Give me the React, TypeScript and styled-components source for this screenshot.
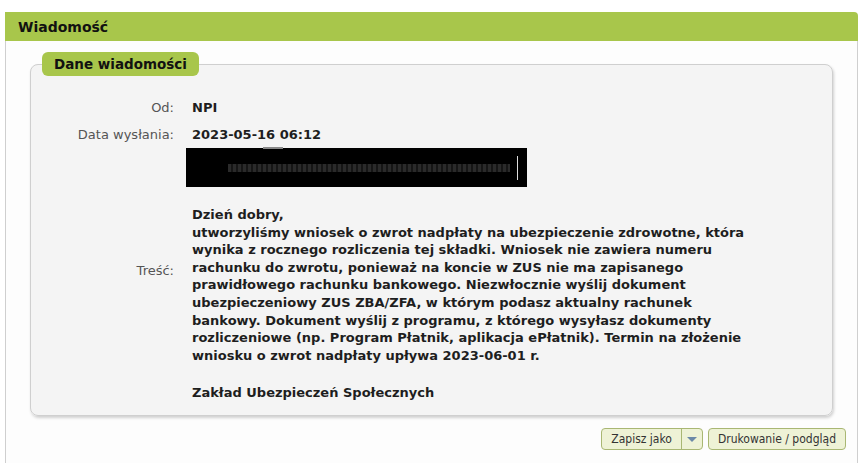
import React from "react";
import styled, { createGlobalStyle } from "styled-components";

const Global = createGlobalStyle`
  html, body { margin: 0; padding: 0; background: #ffffff; }
  body { font-family: "DejaVu Sans", Tahoma, Verdana, sans-serif; color: #1e1e1e; }
`;

const Page = styled.div`
  padding: 12px 7px 0 5px;
`;

const Window = styled.section`
  display: flex;
  flex-direction: column;
  height: 451px;
`;

const Header = styled.header`
  height: 29px;
  background: #a8c64b;
  border-top-right-radius: 4px;
  display: flex;
  align-items: center;
  padding-left: 13px;
  font-weight: bold;
  font-size: 14px;
  color: #111;
`;

const Body = styled.div`
  flex: 1;
  background: #fdfdfd;
  border-left: 1px solid #cfcfcf;
  border-right: 1px solid #cfcfcf;
  padding: 11px 24px 0 24px;
  display: flex;
  flex-direction: column;
`;

const Fieldset = styled.fieldset`
  margin: 0;
  padding: 0 0 14px 0;
  border: 1px solid #cfcfcf;
  border-radius: 8px;
  background: #f4f4f4;
  box-shadow: 1px 2px 3px rgba(0, 0, 0, 0.18);
`;

const Legend = styled.legend`
  margin-left: 11px;
  padding: 0 12px;
  height: 24px;
  line-height: 24px;
  background: #a8c64b;
  border-radius: 6px;
  font-weight: bold;
  font-size: 13.5px;
  color: #111;
`;

const Grid = styled.div`
  display: grid;
  grid-template-columns: 143px 1fr;
  column-gap: 18px;
  padding-top: 23px;
`;

const Label = styled.div<{ $top?: number; $mt?: number }>`
  text-align: right;
  font-size: 13px;
  line-height: 18px;
  color: #555;
  margin-top: ${(p) => p.$mt ?? 0}px;
  padding-top: ${(p) => p.$top ?? 0}px;
`;

const Value = styled.div<{ $mt?: number }>`
  font-size: 13px;
  font-weight: bold;
  line-height: 18px;
  color: #1e1e1e;
  margin-top: ${(p) => p.$mt ?? 0}px;
`;

const Redacted = styled.div`
  position: relative;
  margin-top: 4px;
  margin-left: -6px;
  width: 341px;
  height: 39px;
  background: #000;
  display: flex;
  align-items: center;
  padding-left: 42px;
  box-sizing: border-box;
`;

const RedactTab = styled.span`
  position: absolute;
  top: -1px;
  left: 77px;
  width: 20px;
  height: 2px;
  background: #888;
`;

const RedactBar = styled.span`
  width: 282px;
  height: 8px;
  background: repeating-linear-gradient(90deg, #2a2a2a 0 3px, #151515 3px 5px);
`;

const RedactEdge = styled.span`
  position: absolute;
  right: 9px;
  top: 8px;
  width: 1px;
  height: 24px;
  background: #ddd;
`;

const Message = styled.div`
  margin-top: 19px;
  font-size: 13px;
  font-weight: bold;
  line-height: 17.6px;
  color: #1e1e1e;
`;

const Line = styled.div`
  white-space: nowrap;
`;

const Signature = styled.div`
  margin-top: 19.4px;
  white-space: nowrap;
`;

const Actions = styled.div`
  display: flex;
  justify-content: flex-end;
  gap: 5px;
  margin-top: 12px;
  margin-right: -13px;
`;

const ButtonGroup = styled.div`
  display: flex;
  border: 1px solid #a9b773;
  border-radius: 4px;
  background: #eef2d6;
  height: 20px;
  overflow: hidden;
`;

const Button = styled.button<{ $narrow?: boolean }>`
  font-family: "DejaVu Sans Condensed", "DejaVu Sans", sans-serif;
  font-stretch: condensed;
  font-size: 12px;
  color: #333;
  background: transparent;
  border: none;
  padding: ${(p) => (p.$narrow ? "0 5px" : "0 9px")};
  height: 20px;
  line-height: 20px;
  display: flex;
  align-items: center;
  cursor: pointer;
  & + & {
    border-left: 1px solid #a9b773;
  }
`;

const Arrow = styled.span`
  width: 0;
  height: 0;
  border-left: 5px solid transparent;
  border-right: 5px solid transparent;
  border-top: 5px solid #6c89a8;
`;

const lines = [
  "Dzień dobry,",
  "utworzyliśmy wniosek o zwrot nadpłaty na ubezpieczenie zdrowotne, która",
  "wynika z rocznego rozliczenia tej składki. Wniosek nie zawiera numeru",
  "rachunku do zwrotu, ponieważ na koncie w ZUS nie ma zapisanego",
  "prawidłowego rachunku bankowego. Niezwłocznie wyślij dokument",
  "ubezpieczeniowy ZUS ZBA/ZFA, w którym podasz aktualny rachunek",
  "bankowy. Dokument wyślij z programu, z którego wysyłasz dokumenty",
  "rozliczeniowe (np. Program Płatnik, aplikacja ePłatnik). Termin na złożenie",
  "wniosku o zwrot nadpłaty upływa 2023-06-01 r.",
];

export default function App() {
  return (
    <>
      <Global />
      <Page>
        <Window>
          <Header>Wiadomość</Header>
          <Body>
            <Fieldset>
              <Legend>Dane wiadomości</Legend>
              <Grid>
                <Label>Od:</Label>
                <Value>NPI</Value>
                <Label $mt={9}>Data wysłania:</Label>
                <Value $mt={9}>2023-05-16 06:12</Value>
                <div />
                <Redacted>
                  <RedactTab />
                  <RedactBar />
                  <RedactEdge />
                </Redacted>
                <Label $top={75}>Treść:</Label>
                <Message>
                  {lines.map((l, i) => (
                    <Line key={i}>{l}</Line>
                  ))}
                  <Signature>Zakład Ubezpieczeń Społecznych</Signature>
                </Message>
              </Grid>
            </Fieldset>
            <Actions>
              <ButtonGroup>
                <Button>Zapisz jako</Button>
                <Button $narrow aria-label="Więcej">
                  <Arrow />
                </Button>
              </ButtonGroup>
              <ButtonGroup>
                <Button>Drukowanie / podgląd</Button>
              </ButtonGroup>
            </Actions>
          </Body>
        </Window>
      </Page>
    </>
  );
}
